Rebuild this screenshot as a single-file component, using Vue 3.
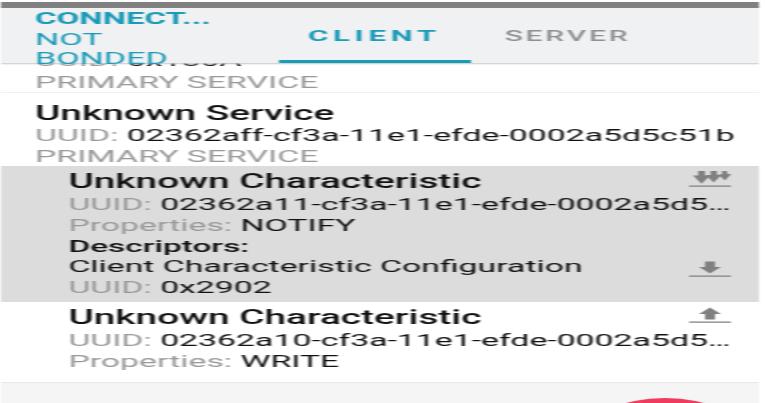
<template>
  <div class="screen">
    <div class="status"></div>
    <header class="toolbar">
      <div class="state">
        <div class="conn">CONNECT...</div>
        <div class="bond">NOT BONDED</div>
      </div>
      <div class="tab active">CLIENT</div>
      <div class="tab idle">SERVER</div>
    </header>

    <section class="service first">
      <div class="line"><span class="key">UUID: </span>0x180A</div>
      <div class="line key tail">PRIMARY SERVICE</div>
    </section>

    <section class="service">
      <div class="title">Unknown Service</div>
      <div class="line"><span class="key">UUID: </span>02362aff-cf3a-11e1-efde-0002a5d5c51b</div>
      <div class="line key kind">PRIMARY SERVICE</div>
    </section>

    <section class="char selected">
      <div class="char-row">
        <div class="char-info">
          <div class="title">Unknown Characteristic</div>
          <div class="line"><span class="key">UUID: </span>02362a11-cf3a-11e1-efde-0002a5d5c51b</div>
          <div class="line"><span class="key">Properties: </span>NOTIFY</div>
        </div>
        <svg class="icon" viewBox="0 0 21 16">
          <path d="M0 14.4h21v1.4H0z" />
          <path d="M2 4.5h2.6V0h3.4v4.5h2.6L6.3 12.8z" />
          <path d="M8.3 4h2.5V0h3.2v4h2.3l-4 7.6z" />
          <path d="M14.6 3.4l2-.1-.2-3 2.6-.3.2 3 2-.1-3.2 6.6z" />
        </svg>
      </div>
      <div class="line desc-head">Descriptors:</div>
      <div class="char-row">
        <div class="char-info">
          <div class="line">Client Characteristic Configuration</div>
          <div class="line"><span class="key">UUID: </span>0x2902</div>
        </div>
        <svg class="icon low" viewBox="0 0 21 16">
          <path d="M0 14.4h21v1.4H0z" />
          <path d="M5 6h3V0.5h5V6h3l-5.5 6.5z" />
        </svg>
      </div>
    </section>

    <section class="char last">
      <div class="char-row">
        <div class="char-info">
          <div class="title">Unknown Characteristic</div>
          <div class="line"><span class="key">UUID: </span>02362a10-cf3a-11e1-efde-0002a5d5c51b</div>
          <div class="line"><span class="key">Properties: </span>WRITE</div>
        </div>
        <svg class="icon" viewBox="0 0 21 16">
          <path d="M0 14.4h21v1.4H0z" />
          <path d="M5 7h3v5.5h5V7h3L10.5 0.5z" />
        </svg>
      </div>
    </section>

    <footer class="bottom">
      <div class="fab"></div>
    </footer>
  </div>
</template>

<script setup>
</script>

<style>
html, body {
  background: #fff;
  overflow: hidden;
}
</style>

<style scoped>
.screen {
  width: 379px;
  height: 403px;
  margin-left: 1px;
  overflow: hidden;
  transform: scaleX(2);
  transform-origin: left top;
  filter: blur(0.4px);
  font-family: Roboto, "Liberation Sans", sans-serif;
  color: #111;
  position: relative;
}

.status {
  height: 8px;
  border-top: 2px solid #fff;
  box-sizing: border-box;
  background: #808080;
}

.toolbar {
  position: relative;
  z-index: 2;
  height: 55px;
  display: flex;
  background: #f0f1f3;
  box-shadow: 0 1px 1px #c8c8c8;
}

.state {
  width: 139px;
  padding: 1px 0 0 17px;
  box-sizing: border-box;
  color: #1a9bb8;
  font-size: 17px;
  font-weight: 400;
  line-height: 20px;
}

.conn {
  font-size: 16.5px;
  font-weight: 700;
}

.bond {
  width: 60px;
  margin-top: 1px;
  line-height: 19px;
}

.tab {
  width: 95.5px;
  box-sizing: border-box;
  padding-top: 18px;
  text-align: center;
  color: #909090;
  font-size: 15px;
  font-weight: 500;
  letter-spacing: 1.4px;
  line-height: 20px;
}

.tab.active {
  color: #1a9bb8;
  font-size: 15.5px;
  font-weight: 700;
  letter-spacing: 2.4px;
  border-bottom: 3px solid #1a9bb8;
}

.tab.idle {
  padding-left: 2px;
}

.service {
  padding-left: 17px;
  border-bottom: 1px solid #f0f0f0;
}

.service.first {
  margin-top: -13px;
}

.service:not(.first) {
  border-bottom: 0;
  padding-top: 9px;
}

.service .title {
  line-height: 23px;
}

.title {
  font-size: 19.4px;
  font-weight: 500;
  line-height: 24px;
  white-space: nowrap;
}

.line {
  font-size: 16.9px;
  line-height: 21.5px;
  white-space: nowrap;
  overflow: hidden;
  text-overflow: ellipsis;
}

.tail {
  line-height: 20.5px;
}

.key {
  color: #999;
}

.kind {
  line-height: 19px;
}

.char {
  padding: 4px 13px 3px 33.7px;
}

.selected {
  background: #dcdcdc;
}

.last {
  padding-bottom: 9px;
  border-bottom: 1px solid #e8e8e8;
}

.char-row {
  display: flex;
}

.char-info {
  flex: 1;
  min-width: 0;
}

.icon {
  width: 21px;
  height: 16px;
  flex: none;
  margin-left: -22.5px;
  margin-right: 1.5px;
  margin-top: 1px;
  fill: #808080;
  position: relative;
}

.icon.low {
  margin-top: 5px;
}

.desc-head {
  font-size: 16.7px;
  font-weight: 500;
  line-height: 19px;
}

.bottom {
  height: 60px;
  background: #f5f5f5;
  position: relative;
}

.fab {
  position: absolute;
  left: 292px;
  top: 15px;
  width: 80px;
  height: 80px;
  border-radius: 50%;
  background: #ee3b5e;
}
</style>
